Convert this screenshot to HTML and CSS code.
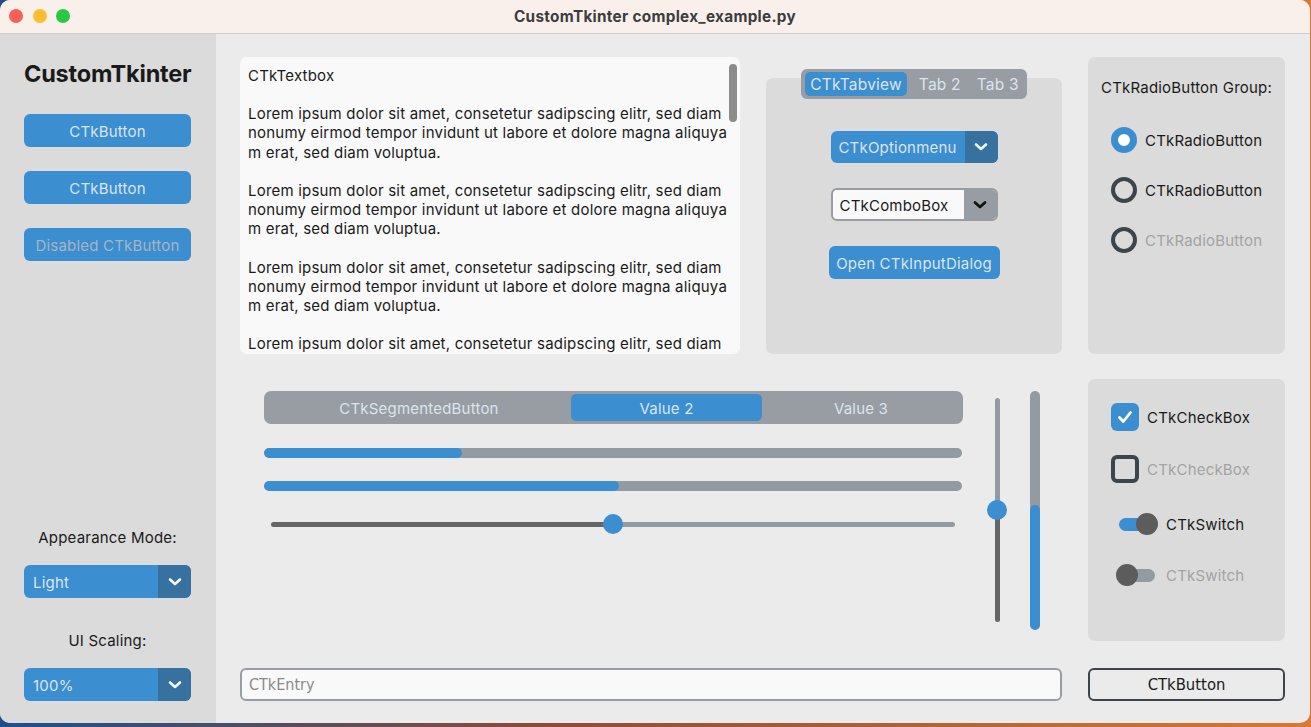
FILE: index.html
```html
<!DOCTYPE html>
<html lang="en">
<head>
<meta charset="utf-8">
<title>CustomTkinter complex_example.py</title>
<link rel="stylesheet" href="styles.css">
</head>
<body>
<div class="window">
  <header class="titlebar">
    <div class="lights">
      <span class="light red"></span><span class="light yellow"></span><span class="light green"></span>
    </div>
    <div class="title">CustomTkinter complex_example.py</div>
    <div></div>
  </header>
  <div class="content">
    <aside class="sidebar">
      <div class="logo">CustomTkinter</div>
      <div class="btn side-btn first">CTkButton</div>
      <div class="btn side-btn">CTkButton</div>
      <div class="btn side-btn disabled">Disabled CTkButton</div>
      <div class="spacer"></div>
      <div class="side-label">Appearance Mode:</div>
      <div class="optmenu side-menu">
        <span class="opt-text left">Light</span>
        <span class="opt-arrow"><svg width="14" height="10" viewBox="0 0 14 10"><polyline points="2,2.5 7,7 12,2.5" fill="none" stroke="#f4f6f8" stroke-width="2.6" stroke-linecap="round" stroke-linejoin="round"/></svg></span>
      </div>
      <div class="side-label second">UI Scaling:</div>
      <div class="optmenu side-menu">
        <span class="opt-text left">100%</span>
        <span class="opt-arrow"><svg width="14" height="10" viewBox="0 0 14 10"><polyline points="2,2.5 7,7 12,2.5" fill="none" stroke="#f4f6f8" stroke-width="2.6" stroke-linecap="round" stroke-linejoin="round"/></svg></span>
      </div>
    </aside>

    <main class="main">
      <div class="textbox">
        <div class="tb-text">
          <p>CTkTextbox</p>
          <p>&nbsp;</p>
          <p>Lorem ipsum dolor sit amet, consetetur sadipscing elitr, sed diam<br>nonumy eirmod tempor invidunt ut labore et dolore magna aliquya<br>m erat, sed diam voluptua.</p>
          <p>&nbsp;</p>
          <p>Lorem ipsum dolor sit amet, consetetur sadipscing elitr, sed diam<br>nonumy eirmod tempor invidunt ut labore et dolore magna aliquya<br>m erat, sed diam voluptua.</p>
          <p>&nbsp;</p>
          <p>Lorem ipsum dolor sit amet, consetetur sadipscing elitr, sed diam<br>nonumy eirmod tempor invidunt ut labore et dolore magna aliquya<br>m erat, sed diam voluptua.</p>
          <p>&nbsp;</p>
          <p>Lorem ipsum dolor sit amet, consetetur sadipscing elitr, sed diam<br>nonumy eirmod tempor invidunt ut labore et dolore magna aliquya<br>m erat, sed diam voluptua.</p>
        </div>
        <div class="scrollbar"></div>
      </div>

      <div class="tabview">
        <div class="tabbar">
          <span class="tab active">CTkTabview</span>
          <span class="tab">Tab 2</span>
          <span class="tab">Tab 3</span>
        </div>
        <div class="tabframe">
          <div class="optmenu tab-menu">
            <span class="opt-text">CTkOptionmenu</span>
            <span class="opt-arrow"><svg width="14" height="10" viewBox="0 0 14 10"><polyline points="2,2.5 7,7 12,2.5" fill="none" stroke="#f4f6f8" stroke-width="2.6" stroke-linecap="round" stroke-linejoin="round"/></svg></span>
          </div>
          <div class="combo">
            <span class="combo-text">CTkComboBox</span>
            <span class="combo-arrow"><svg width="14" height="10" viewBox="0 0 14 10"><polyline points="2,2.5 7,7 12,2.5" fill="none" stroke="#111" stroke-width="2.8" stroke-linecap="round" stroke-linejoin="round"/></svg></span>
          </div>
          <div class="btn dialog-btn">Open CTkInputDialog</div>
        </div>
      </div>

      <div class="panel radio-panel">
        <div class="panel-label">CTkRadioButton Group:</div>
        <div class="radio-row first"><span class="radio on"></span><span class="rlabel">CTkRadioButton</span></div>
        <div class="radio-row"><span class="radio"></span><span class="rlabel">CTkRadioButton</span></div>
        <div class="radio-row"><span class="radio"></span><span class="rlabel muted">CTkRadioButton</span></div>
      </div>

      <div class="controls">
        <div class="controls-left">
          <div class="segmented">
            <span class="seg">CTkSegmentedButton</span>
            <span class="seg active">Value 2</span>
            <span class="seg">Value 3</span>
          </div>
          <div class="progress first"><div class="fill" style="width:28.3%"></div></div>
          <div class="progress"><div class="fill" style="width:50.8%"></div></div>
          <div class="hslider">
            <div class="hs-done"></div>
            <div class="hs-rest"></div>
            <span class="knob"></span>
          </div>
        </div>
        <div class="vslider">
          <div class="vs-rest"></div>
          <div class="vs-done"></div>
          <span class="knob"></span>
        </div>
        <div class="vprogress"><div class="vfill"></div></div>
      </div>

      <div class="panel check-panel">
        <div class="check-row first">
          <span class="checkbox on"><svg width="20" height="20" viewBox="0 0 20 20"><polyline points="4.5,10.5 8.3,14.5 15.5,5.5" fill="none" stroke="#fff" stroke-width="2.8" stroke-linecap="round" stroke-linejoin="round"/></svg></span>
          <span class="clabel">CTkCheckBox</span>
        </div>
        <div class="check-row">
          <span class="checkbox"></span>
          <span class="clabel muted">CTkCheckBox</span>
        </div>
        <div class="switch-row sw1">
          <span class="switch on"><span class="track"></span><span class="thumb"></span></span>
          <span class="clabel">CTkSwitch</span>
        </div>
        <div class="switch-row sw2">
          <span class="switch"><span class="track"></span><span class="thumb"></span></span>
          <span class="clabel muted">CTkSwitch</span>
        </div>
      </div>

      <div class="entry">CTkEntry</div>
      <div class="outline-btn">CTkButton</div>
    </main>
  </div>
</div>
</body>
</html>
```

FILE: styles.css
```css
* { box-sizing: border-box; }

html, body {
  margin: 0;
  padding: 0;
  width: 1311px;
  height: 727px;
  overflow: hidden;
}

body {
  background: linear-gradient(90deg, #1d4f8c 0%, #8a4a3a 40%, #d67a34 100%);
  font-family: "Inter", "Open Sans", "DejaVu Sans", sans-serif;
  font-size: 15px;
  letter-spacing: 0.2px;
  color: #1a1a1a;
}

.window {
  width: 1310px;
  height: 723px;
  border-radius: 10px;
  overflow: hidden;
  background: #ebebeb;
  display: flex;
  flex-direction: column;
}

/* ---------- title bar ---------- */
.titlebar {
  height: 34px;
  flex: 0 0 34px;
  background: #f9f0eb;
  border-bottom: 1px solid #cdcdcd;
  display: grid;
  grid-template-columns: 1fr auto 1fr;
  align-items: center;
}
.lights {
  display: flex;
  gap: 9.5px;
  padding-left: 9px;
  padding-bottom: 1px;
}
.light {
  width: 14px;
  height: 14px;
  border-radius: 50%;
  display: block;
}
.red { background: #fe5f57; }
.yellow { background: #febc2e; }
.green { background: #28c840; }
.title {
  font-size: 15.3px;
  font-weight: 700;
  color: #3d3d3d;
  padding-bottom: 1px;
  letter-spacing: 0.3px;
}

/* ---------- content ---------- */
.content {
  flex: 1;
  display: flex;
  min-height: 0;
}

.sidebar {
  width: 216px;
  flex: 0 0 216px;
  background: #dbdbdb;
  display: flex;
  flex-direction: column;
  padding: 0 25px 22px 24px;
}
.logo {
  margin-top: 26px;
  height: 28px;
  line-height: 28px;
  font-size: 23.5px;
  font-weight: 700;
  letter-spacing: -0.2px;
  color: #1a1a1a;
  text-align: center;
}
.btn {
  height: 33px;
  border-radius: 6px;
  background: #3b8ed0;
  color: #dce4ee;
  display: flex;
  align-items: center;
  justify-content: center;
  padding-top: 1px;
}
.side-btn { margin-top: 24px; }
.side-btn.first { margin-top: 26px; }
.side-btn.disabled { color: #a9b4be; }
.spacer { flex: 1; }
.side-label {
  height: 20px;
  line-height: 20px;
  text-align: center;
  color: #1a1a1a;
  margin-bottom: 17px;
}
.side-label.second { margin-top: 33px; }

.optmenu {
  height: 33px;
  border-radius: 6px;
  background: #3b8ed0;
  display: flex;
  overflow: hidden;
  color: #dce4ee;
}
.opt-text {
  flex: 1;
  display: flex;
  align-items: center;
  justify-content: center;
  padding-top: 1px;
}
.opt-text.left {
  justify-content: flex-start;
  padding-left: 9px;
}
.opt-arrow {
  width: 33px;
  flex: 0 0 33px;
  background: #36719f;
  display: flex;
  align-items: center;
  justify-content: center;
}

/* ---------- main grid ---------- */
.main {
  flex: 1;
  display: grid;
  grid-template-columns: 500px 296px 197px;
  grid-template-rows: 297px 264px 33px;
  column-gap: 26px;
  row-gap: 25px;
  padding: 23px 24px 0 24px;
}

.textbox {
  background: #f9f9f9;
  border-radius: 7px;
  position: relative;
  overflow: hidden;
  padding: 9px 20px 0 8px;
}
.tb-text {
  line-height: 19.15px;
  color: #1a1a1a;
  white-space: nowrap;
}
.tb-text p { margin: 0; }
.scrollbar {
  position: absolute;
  right: 3px;
  top: 7px;
  width: 8px;
  height: 58px;
  border-radius: 4px;
  background: #8c8c8c;
}

/* tabview */
.tabview {
  display: flex;
  flex-direction: column;
}
.tabbar {
  align-self: center;
  margin-top: 12px;
  margin-bottom: -21px;
  height: 30px;
  position: relative;
  z-index: 1;
  background: #979da2;
  border-radius: 6px;
  padding: 3px 0 3px 4px;
  display: flex;
}
.tab {
  display: flex;
  align-items: center;
  padding: 1px 8px 0;
  border-radius: 5px;
  color: #dce4ee;
  font-size: 15.5px;
}
.tab.active {
  background: #3b8ed0;
  padding: 1px 5px 0;
  margin-right: 4px;
}
.tabframe {
  flex: 1;
  background: #dbdbdb;
  border-radius: 7px;
  display: flex;
  flex-direction: column;
  align-items: center;
  padding-top: 53px;
}
.tab-menu {
  width: 167px;
  height: 32px;
}
.combo {
  margin-top: 25px;
  width: 167px;
  height: 33px;
  border: 2px solid #979da2;
  border-radius: 6px;
  background: #f9f9fa;
  display: flex;
  overflow: hidden;
}
.combo-text {
  flex: 1;
  display: flex;
  align-items: center;
  padding-left: 7px;
  padding-top: 1px;
  color: #1a1a1a;
}
.combo-arrow {
  width: 32px;
  flex: 0 0 32px;
  background: #979da2;
  display: flex;
  align-items: center;
  justify-content: center;
}
.dialog-btn {
  margin-top: 25px;
  width: 171px;
  height: 33px;
}

/* panels */
.panel {
  background: #dbdbdb;
  border-radius: 7px;
}
.radio-panel {
  display: flex;
  flex-direction: column;
  padding-left: 23px;
}
.panel-label {
  margin-top: 21px;
  margin-left: -23px;
  height: 20px;
  line-height: 20px;
  text-align: center;
}
.radio-row {
  display: flex;
  align-items: center;
  gap: 8px;
  height: 26px;
  margin-top: 24px;
}
.radio-row.first { margin-top: 29px; }
.radio {
  width: 26px;
  height: 26px;
  border-radius: 50%;
  border: 4px solid #3e454a;
  flex: 0 0 26px;
}
.radio.on {
  border: 7px solid #3b8ed0;
  background: #ffffff;
}
.muted { color: #a3a3a3; }

/* controls */
.controls {
  grid-column: 1 / 3;
  display: flex;
  padding-top: 12px;
  padding-left: 24px;
}
.controls-left {
  width: 699px;
  display: flex;
  flex-direction: column;
}
.segmented {
  height: 33px;
  background: #979da2;
  border-radius: 7px;
  padding: 3px;
  display: grid;
  grid-template-columns: 304px 191px 1fr;
}
.seg {
  display: flex;
  align-items: center;
  justify-content: center;
  color: #dce4ee;
  border-radius: 5px;
  padding-top: 1px;
}
.seg.active { background: #3b8ed0; }
.progress {
  margin-top: 23px;
  height: 10px;
  width: 698px;
  border-radius: 5px;
  background: #939ba2;
  overflow: hidden;
}
.progress.first { margin-top: 24px; }
.fill {
  height: 100%;
  background: #3b8ed0;
  border-radius: 5px;
}
.hslider {
  margin-top: 23px;
  height: 20px;
  position: relative;
  display: flex;
  align-items: center;
  padding: 0 8px 0 7px;
}
.hs-done {
  width: 342px;
  height: 5px;
  background: #666666;
  border-radius: 3px 0 0 3px;
}
.hs-rest {
  flex: 1;
  height: 5px;
  background: #939ba2;
  border-radius: 0 3px 3px 0;
}
.hslider .knob {
  position: absolute;
  left: 339px;
  top: 0;
}
.knob {
  display: block;
  width: 20px;
  height: 20px;
  border-radius: 50%;
  background: #3b8ed0;
}
.vslider {
  margin-left: 24px;
  margin-top: 7px;
  width: 20px;
  height: 224px;
  position: relative;
  display: flex;
  flex-direction: column;
  align-items: center;
}
.vs-rest {
  width: 5px;
  height: 112px;
  background: #939ba2;
  border-radius: 3px 3px 0 0;
}
.vs-done {
  width: 5px;
  flex: 1;
  background: #666666;
  border-radius: 0 0 3px 3px;
}
.vslider .knob {
  position: absolute;
  top: 102px;
  left: 0;
}
.vprogress {
  margin-left: 23px;
  width: 10px;
  height: 239px;
  border-radius: 5px;
  background: #939ba2;
  display: flex;
  flex-direction: column;
  justify-content: flex-end;
  overflow: hidden;
}
.vfill {
  height: 125px;
  background: #3b8ed0;
  border-radius: 5px;
}

/* checks */
.check-panel {
  align-self: start;
  height: 262px;
  display: flex;
  flex-direction: column;
  padding-left: 23px;
}
.check-row {
  display: flex;
  align-items: center;
  gap: 8px;
  height: 28px;
  margin-top: 24px;
}
.checkbox {
  width: 28px;
  height: 28px;
  flex: 0 0 28px;
  border-radius: 6px;
  border: 4px solid #3e454a;
  display: flex;
  align-items: center;
  justify-content: center;
}
.checkbox.on {
  background: #3b8ed0;
  border: none;
}
.switch-row {
  display: flex;
  align-items: center;
  gap: 8px;
  height: 22px;
  margin-left: 5px;
}
.switch-row.sw1 { margin-top: 30px; }
.switch-row.sw2 { margin-top: 29px; }
.switch {
  position: relative;
  width: 42px;
  height: 22px;
  flex: 0 0 42px;
}
.track {
  position: absolute;
  left: 3px;
  right: 3px;
  top: 4.5px;
  height: 13px;
  border-radius: 7px;
  background: #939ba2;
}
.switch.on .track { background: #3b8ed0; }
.thumb {
  position: absolute;
  top: 0;
  left: 0;
  width: 22px;
  height: 22px;
  border-radius: 50%;
  background: #5c5c5c;
}
.switch.on .thumb { left: 20px; }

/* bottom row */
.entry {
  grid-column: 1 / 3;
  background: #f9f9fa;
  border: 2px solid #979da2;
  border-radius: 6px;
  display: flex;
  align-items: center;
  padding-left: 7px;
  font-family: "DejaVu Sans Condensed", "Liberation Sans Narrow", "Liberation Sans", sans-serif;
  font-stretch: condensed;
  font-size: 16px;
  letter-spacing: 0;
  color: #8a8a8a;
}
.outline-btn {
  border: 2px solid #3e454a;
  border-radius: 6px;
  background: #ebebeb;
  display: flex;
  align-items: center;
  justify-content: center;
  font-family: "DejaVu Sans Condensed", "Liberation Sans Narrow", "Liberation Sans", sans-serif;
  font-stretch: condensed;
  font-size: 16.5px;
  letter-spacing: 0;
  color: #1a1a1a;
}
```
